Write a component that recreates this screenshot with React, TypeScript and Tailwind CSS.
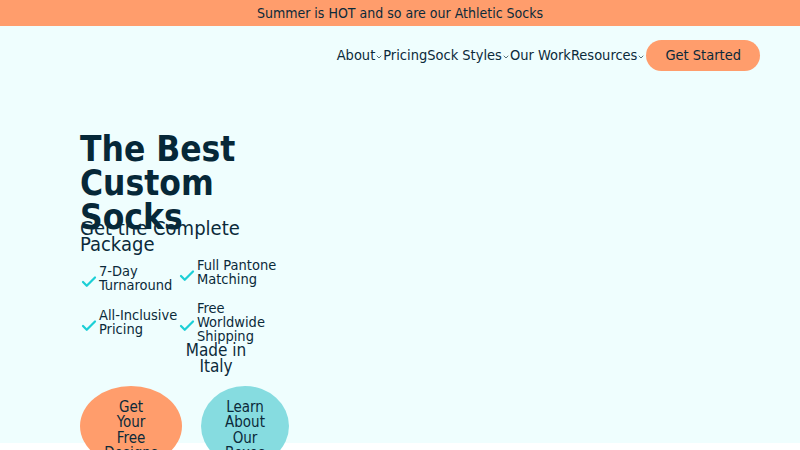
import { Check, ChevronDown } from 'lucide-react'

const FEATURES = [
  { text: '7-Day Turnaround', cls: 'pt-[6px]' },
  { text: 'Full Pantone Matching', cls: 'self-start' },
  { text: 'All-Inclusive Pricing', cls: '' },
  { text: 'Free Worldwide Shipping', cls: '' },
]

const NAV = [
  { label: 'About', drop: true },
  { label: 'Pricing', drop: false },
  { label: 'Sock Styles', drop: true },
  { label: 'Our Work', drop: false },
  { label: 'Resources', drop: true },
]

export default function App() {
  return (
    <div className="min-h-[450px] bg-white text-[#0b2a3a] font-['DejaVu_Sans_Condensed','DejaVu_Sans',sans-serif]">
      {/* Promo banner */}
      <div className="h-[26px] bg-[#ff9d6c] flex items-center justify-center text-[14px]">
        Summer is HOT and so are our Athletic Socks
      </div>

      <div className="bg-[#effefe] h-[417px]">
        {/* Nav */}
        <nav className="flex justify-end items-center pr-[40px] pt-[14px] pb-[14px]">
          <ul className="flex items-center text-[14.5px]">
            {NAV.map((n) => (
              <li key={n.label} className="flex items-center">
                {n.label}
                {n.drop && <ChevronDown size={8} strokeWidth={2} className="mt-[3px]" />}
              </li>
            ))}
          </ul>
          <button className="ml-[1px] h-[31px] px-[19px] rounded-full bg-[#ff9d6c] text-[14.5px] leading-[31px]">Get Started</button>
        </nav>

        {/* Hero */}
        <div className="ml-[80px] pt-[47px] w-[198px]">
          <h1 className="h-[88px] text-[35px] leading-[34px] font-bold text-[#062838]">The Best Custom Socks</h1>
          <p className="text-[20px] leading-[16px]">Get the Complete Package</p>

          <div className="mt-[6px] grid grid-cols-[98px_100px] gap-y-[9px] items-center">
            {FEATURES.map((f) => (
              <div key={f.text} className={`flex items-center ${f.cls}`}>
                <Check size={18} strokeWidth={3} className="text-[#1ccfd6] shrink-0 mt-[8px]" />
                <span className="text-[14.5px] leading-[14px] pl-[1px]">{f.text}</span>
              </div>
            ))}
            <div className="col-start-2 -mt-[10px] w-[76px] text-center text-[17px] leading-[16px]">Made in Italy</div>
          </div>

          <div className="mt-[12px] flex gap-[19px] items-start">
            <button className="w-[102px] h-[80px] rounded-[50%] bg-[#ff9d6c] pt-[9px] flex-none">
              <span className="block text-[15px] leading-[15.4px] w-[56px] mx-auto">Get Your Free Designs</span>
            </button>
            <button className="w-[88px] h-[80px] rounded-[50%] bg-[#86dce0] pt-[9px] flex-none">
              <span className="block text-[15px] leading-[15.4px] w-[44px] mx-auto">Learn About Our Boxes</span>
            </button>
          </div>
        </div>
      </div>
    </div>
  )
}
